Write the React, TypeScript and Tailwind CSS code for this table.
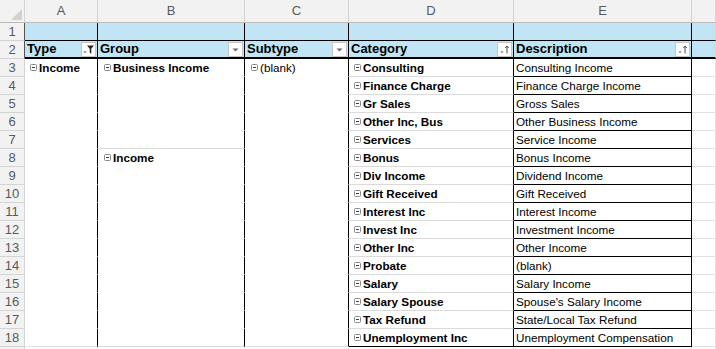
import React from "react";

type Row = {
  n: number;
  a?: string;
  b?: string;
  c?: string;
  d?: string;
  e?: string;
};

const rows: Row[] = [
  { n: 3, a: "Income", b: "Business Income", c: "(blank)", d: "Consulting", e: "Consulting Income" },
  { n: 4, d: "Finance Charge", e: "Finance Charge Income" },
  { n: 5, d: "Gr Sales", e: "Gross Sales" },
  { n: 6, d: "Other Inc, Bus", e: "Other Business Income" },
  { n: 7, d: "Services", e: "Service Income" },
  { n: 8, b: "Income", d: "Bonus", e: "Bonus Income" },
  { n: 9, d: "Div Income", e: "Dividend Income" },
  { n: 10, d: "Gift Received", e: "Gift Received" },
  { n: 11, d: "Interest Inc", e: "Interest Income" },
  { n: 12, d: "Invest Inc", e: "Investment Income" },
  { n: 13, d: "Other Inc", e: "Other Income" },
  { n: 14, d: "Probate", e: "(blank)" },
  { n: 15, d: "Salary", e: "Salary Income" },
  { n: 16, d: "Salary Spouse", e: "Spouse's Salary Income" },
  { n: 17, d: "Tax Refund", e: "State/Local Tax Refund" },
  { n: 18, d: "Unemployment Inc", e: "Unemployment Compensation" },
];

const letters = ["A", "B", "C", "D", "E", ""];

function Collapse() {
  return (
    <svg width="7" height="7" viewBox="0 0 7 7" className="shrink-0 mr-[2px]">
      <rect x="0.5" y="0.5" width="6" height="6" rx="1" fill="white" stroke="#8a8a8a" />
      <line x1="2" y1="3.5" x2="5" y2="3.5" stroke="#404040" />
    </svg>
  );
}

function FilterBtn({ kind }: { kind: "filter" | "drop" | "sort" }) {
  return (
    <div className="w-[15px] h-[15px] shrink-0 bg-white border border-[#c6c6c6] flex items-center justify-center mr-[1px]">
      {kind === "drop" && (
        <svg width="13" height="13" viewBox="0 0 13 13">
          <path d="M3.5 5.5h6l-3 3z" fill="#6b6b6b" />
        </svg>
      )}
      {kind === "filter" && (
        <svg width="13" height="13" viewBox="0 0 13 13">
          <path d="M1.5 8.5h3l-1.5 1.5z" fill="#404040" />
          <path d="M5 2.5h7l-2.7 3.3v5l-1.6-1v-4z" fill="#262626" />
        </svg>
      )}
      {kind === "sort" && (
        <svg width="13" height="13" viewBox="0 0 13 13">
          <path d="M2.5 8.5h3l-1.5 1.6z" fill="#505050" />
          <path d="M9 3v7.5" stroke="#505050" strokeWidth="1" />
          <path d="M7.3 5L9 3l1.7 2" fill="none" stroke="#505050" strokeWidth="1" />
        </svg>
      )}
    </div>
  );
}

function HeadCell({ label, kind }: { label: string; kind: "filter" | "drop" | "sort" }) {
  return (
    <div className="h-[18px] bg-[#c1e5f5] border-r border-b-2 border-r-black border-b-black flex items-center justify-between pl-[2px] text-[13px] font-bold text-black">
      <span>{label}</span>
      <FilterBtn kind={kind} />
    </div>
  );
}

export default function App() {
  return (
    <div
      className="w-[716px] h-[349px] overflow-hidden bg-white text-black"
      style={{ fontFamily: '"Liberation Sans", Arial, sans-serif' }}
    >
      <div className="grid grid-cols-[25px_73px_147px_104px_165px_178px_24px]">
        {/* column letters */}
        <div className="h-[23px] bg-[#f2f2f2] border-r border-b border-r-[#d4d4d4] border-b-[#bcbcbc] relative">
          <svg width="25" height="23" className="absolute inset-0">
            <path d="M22 9v11h-11z" fill="#d2d2d2" />
          </svg>
        </div>
        {letters.map((l, i) => (
          <div
            key={i}
            className="h-[23px] bg-[#f2f2f2] border-r border-b border-r-[#d4d4d4] border-b-[#bcbcbc] flex items-center justify-center text-[13px] text-[#5a5a5a]"
          >
            {l}
          </div>
        ))}

        {/* row 1 */}
        <div className="h-[18px] bg-[#f2f2f2] border-r border-b border-r-[#555555] border-b-[#d4d4d4] flex items-center justify-center text-[13px] text-[#5a5a5a]">
          1
        </div>
        {[0, 1, 2, 3, 4].map((i) => (
          <div key={i} className="h-[18px] bg-[#c1e5f5] border-r border-b border-r-black border-b-black" />
        ))}
        <div className="h-[18px] bg-[#c1e5f5] border-r border-b border-r-[#d4d4d4] border-b-black" />

        {/* row 2 */}
        <div className="h-[18px] bg-[#f2f2f2] border-r border-b border-r-[#555555] border-b-[#d4d4d4] flex items-center justify-center text-[13px] text-[#5a5a5a]">
          2
        </div>
        <HeadCell label="Type" kind="filter" />
        <HeadCell label="Group" kind="drop" />
        <HeadCell label="Subtype" kind="drop" />
        <HeadCell label="Category" kind="sort" />
        <HeadCell label="Description" kind="sort" />
        <div className="h-[18px] bg-[#c1e5f5] border-r border-b-2 border-r-[#d4d4d4] border-b-black" />

        {/* data */}
        {rows.map((r) => {
          const last = r.n === 18;
          return (
            <React.Fragment key={r.n}>
              <div className="h-[18px] bg-[#f2f2f2] border-r border-b border-r-[#d4d4d4] border-b-[#d4d4d4] flex items-center justify-center text-[13px] text-[#5a5a5a]">
                {r.n}
              </div>
              <div
                className={
                  last
                    ? "h-[18px] border-r border-b border-r-black border-b-[#e1e1e1] flex items-center pl-[5px] text-[11.7px] font-bold whitespace-nowrap"
                    : "h-[18px] border-r border-b border-r-black border-b-white flex items-center pl-[5px] text-[11.7px] font-bold whitespace-nowrap"
                }
              >
                {r.a && (
                  <>
                    <Collapse />
                    {r.a}
                  </>
                )}
              </div>
              <div
                className={
                  r.n === 7 || last
                    ? "h-[18px] border-r border-b border-r-black border-b-[#dadada] flex items-center pl-[6px] text-[11.7px] font-bold whitespace-nowrap"
                    : "h-[18px] border-r border-b border-r-black border-b-white flex items-center pl-[6px] text-[11.7px] font-bold whitespace-nowrap"
                }
              >
                {r.b && (
                  <>
                    <Collapse />
                    {r.b}
                  </>
                )}
              </div>
              <div
                className={
                  last
                    ? "h-[18px] border-r border-b border-r-black border-b-[#e1e1e1] flex items-center pl-[6px] text-[11.7px] whitespace-nowrap"
                    : "h-[18px] border-r border-b border-r-black border-b-white flex items-center pl-[6px] text-[11.7px] whitespace-nowrap"
                }
              >
                {r.c && (
                  <>
                    <Collapse />
                    {r.c}
                  </>
                )}
              </div>
              <div
                className={
                  last
                    ? "h-[18px] border-r border-b border-r-black border-b-black flex items-center pl-[5px] text-[11.7px] font-bold whitespace-nowrap"
                    : "h-[18px] border-r border-b border-r-black border-b-[#dadada] flex items-center pl-[5px] text-[11.7px] font-bold whitespace-nowrap"
                }
              >
                <Collapse />
                {r.d}
              </div>
              <div className="h-[18px] border-r border-b border-r-black border-b-black flex items-center pl-[2px] text-[11.7px] whitespace-nowrap">
                {r.e}
              </div>
              <div className="h-[18px] border-r border-b border-r-[#e1e1e1] border-b-[#e1e1e1]" />
            </React.Fragment>
          );
        })}

        {/* row 19, only its top edge shows */}
        <div className="h-[18px] bg-[#f2f2f2] border-r border-r-[#d4d4d4]" />
        <div className="h-[18px] border-r border-r-[#e1e1e1]" />
        <div className="h-[18px] border-r border-r-[#e1e1e1]" />
        <div className="h-[18px] border-r border-r-[#e1e1e1]" />
        <div className="h-[18px] border-r border-r-[#e1e1e1]" />
        <div className="h-[18px] border-r border-r-[#e1e1e1]" />
        <div className="h-[18px] border-r border-r-[#e1e1e1]" />
      </div>
    </div>
  );
}
